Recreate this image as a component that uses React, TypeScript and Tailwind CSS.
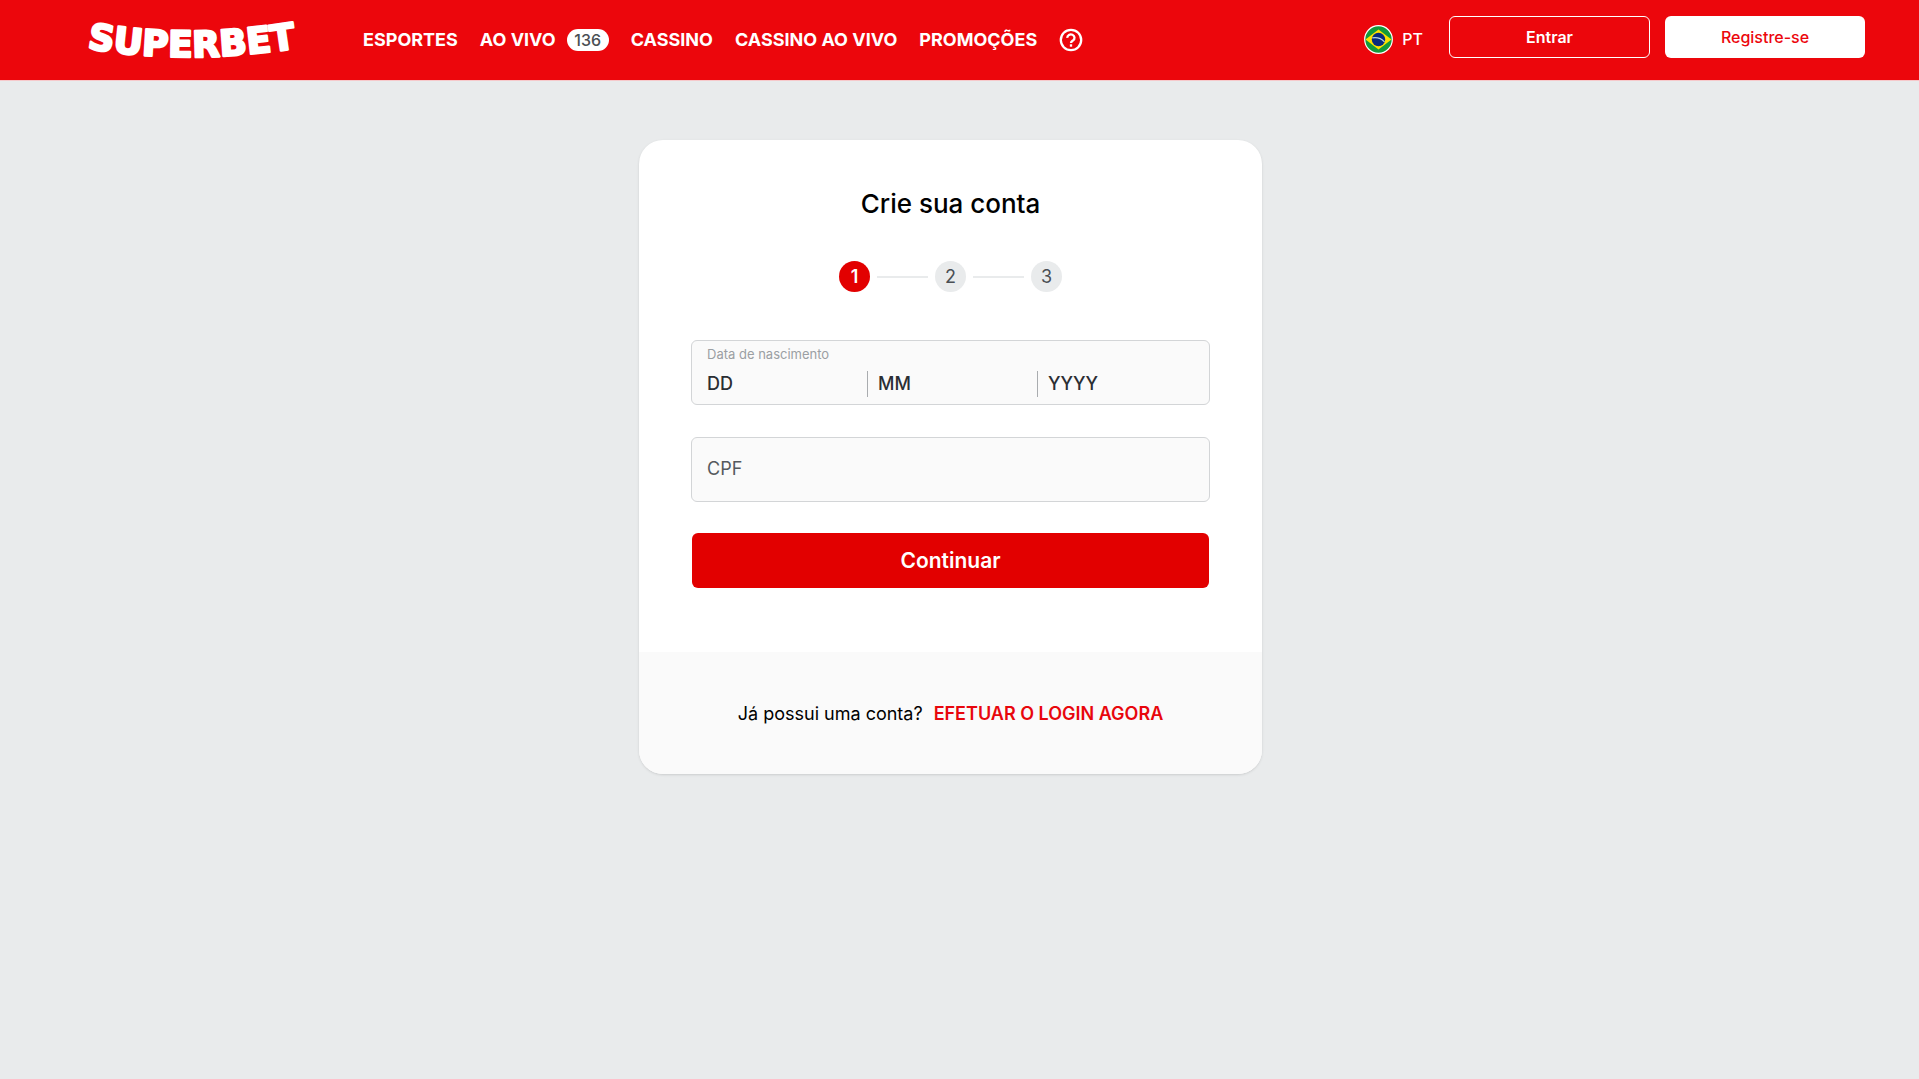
function Logo() {
  return (
    <svg width="208" height="48" viewBox="0 0 208 48" className="shrink-0 overflow-visible" role="img" aria-label="Superbet">
      <path id="logo-curve" d="M-1 32 Q103 51 220 30" fill="none" />
      <text
        className="fill-white stroke-white font-['DejaVu_Sans',sans-serif] font-bold"
        fontSize="36"
        strokeWidth="2.4"
        strokeLinejoin="round"
      >
        <textPath href="#logo-curve">SUPERBET</textPath>
      </text>
    </svg>
  );
}

function HelpIcon() {
  return (
    <svg width="24" height="24" viewBox="0 0 24 24" fill="none" stroke="currentColor" strokeWidth="2.3">
      <circle cx="12" cy="12" r="10.2" />
      <path d="M8.300 9.900a3.600 3.300 0 1 1 5.800 2.500c-1.200.9-2.100 1.300-2.100 2.600" />
      <path d="M12 16.300v2.400" />
    </svg>
  );
}

function BrazilFlag() {
  return (
    <svg width="29" height="29" viewBox="0 0 29 29" className="shrink-0">
      <circle cx="14.500" cy="14.500" r="13.800" fill="#129a3a" stroke="#fff" strokeWidth="1.200" />
      <path d="M1.500 14.500 14.500 4.500l13 10-13 10z" fill="#fce100" />
      <circle cx="14.500" cy="14.500" r="6.700" fill="#082b7d" />
      <path d="M8.300 12.800c4.500-.8 9 .5 12.200 4" fill="none" stroke="#b9d3de" strokeWidth="1.200" />
    </svg>
  );
}

function Step({ value, active }: { value: number; active?: boolean }) {
  return (
    <li
      aria-current={active ? "step" : undefined}
      className={
        active
          ? "flex size-[31px] items-center justify-center rounded-full bg-[#e20000] text-lg font-semibold text-white"
          : "flex size-[31px] items-center justify-center rounded-full bg-[#e9ebec] text-lg text-[#4a4f54]"
      }
    >
      {value}
    </li>
  );
}

function StepLine() {
  return <li aria-hidden="true" className="mx-[7px] h-0.5 w-[51px] bg-[#e9ebec]" />;
}

const dateInput =
  "h-[26px] min-w-0 bg-transparent text-lg font-medium text-[#2b2e33] outline-none placeholder:text-[#2b2e33] placeholder:opacity-100";

export default function App() {
  return (
    <div className="min-h-screen bg-[#e9ebec] font-['Inter',sans-serif] text-black">
      <header className="flex h-[81px] items-center justify-between border-b border-[#f6c9cb] bg-[#ec060c] pr-[54px] pl-[88px] text-white">
        <div className="flex items-center">
          <a href="#">
            <Logo />
          </a>
          <nav className="ml-[67px] flex items-center gap-[22px] text-lg font-bold whitespace-nowrap">
            <a href="#">ESPORTES</a>
            <a href="#" className="flex items-center gap-[11px]">
              AO VIVO
              <span className="flex h-[22px] w-[42px] items-center justify-center rounded-full bg-white text-base font-medium text-[#4a4f54]">
                136
              </span>
            </a>
            <a href="#">CASSINO</a>
            <a href="#">CASSINO AO VIVO</a>
            <a href="#">PROMOÇÕES</a>
            <button type="button" aria-label="Ajuda">
              <HelpIcon />
            </button>
          </nav>
        </div>
        <div className="flex items-center pb-1.5">
          <button type="button" className="mt-1 mr-[26px] flex items-center gap-[9px] text-base font-medium">
            <BrazilFlag />
            PT
          </button>
          <button type="button" className="mr-[15px] h-[42px] w-[201px] rounded-md border border-white text-base font-semibold">
            Entrar
          </button>
          <button type="button" className="h-[42px] w-[200px] rounded-md bg-white text-base font-medium text-[#ec060c]">
            Registre-se
          </button>
        </div>
      </header>

      <main className="flex justify-center pt-[59px] pr-[18px]">
        <div className="w-[623px] overflow-hidden rounded-3xl bg-white shadow-sm">
          <form className="px-[52px] pt-[47px] pb-16">
            <h1 className="text-center text-[26px] leading-[34px] font-medium">Crie sua conta</h1>
            <ol className="mt-10 flex items-center justify-center">
              <Step value={1} active />
              <StepLine />
              <Step value={2} />
              <StepLine />
              <Step value={3} />
            </ol>

            <fieldset className="mt-12 h-[65px] min-w-0 rounded-md border border-[#d3d5d7] bg-[#fafafa] px-[15px] pt-1">
              <div id="birth-label" className="text-[13px] leading-[18px] text-[#9b9fa3]">
                Data de nascimento
              </div>
              <div role="group" aria-labelledby="birth-label" className="mt-2 grid grid-cols-[160px_170px_1fr]">
                <input aria-label="Dia" placeholder="DD" className={dateInput} />
                <input aria-label="Mês" placeholder="MM" className={dateInput + " border-l border-[#a9acaf] pl-[10px]"} />
                <input aria-label="Ano" placeholder="YYYY" className={dateInput + " border-l border-[#a9acaf] pl-[10px]"} />
              </div>
            </fieldset>

            <input
              aria-label="CPF"
              placeholder="CPF"
              className="mt-8 block h-[65px] w-full rounded-md border border-[#d3d5d7] bg-[#fafafa] px-[15px] pb-0.5 text-lg outline-none placeholder:text-[#55595e] placeholder:opacity-100"
            />

            <div className="mt-[31px] px-px">
              <button type="submit" className="block h-[55px] w-full rounded-md bg-[#e20000] text-[21px] font-semibold text-white">
                Continuar
              </button>
            </div>
          </form>
          <div className="flex h-[122px] items-center justify-center gap-[11px] bg-[#fafafa] pt-0.5 text-lg">
            <span>Já possui uma conta?</span>
            <a href="#" className="font-semibold text-[#e8060c]">
              EFETUAR O LOGIN AGORA
            </a>
          </div>
        </div>
      </main>
    </div>
  );
}
